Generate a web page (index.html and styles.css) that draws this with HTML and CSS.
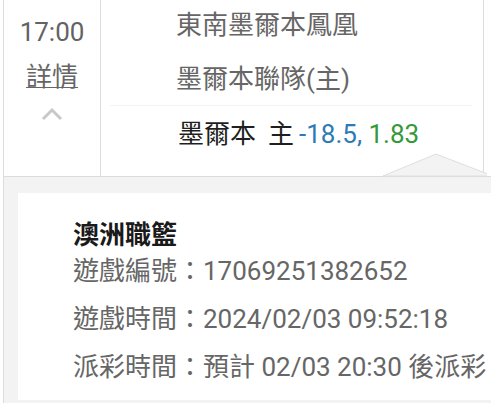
FILE: index.html
```html
<!DOCTYPE html>
<html lang="zh-Hant">
<head>
<meta charset="utf-8">
<link rel="stylesheet" href="styles.css">
</head>
<body>
<div class="frame">
  <div class="row">
    <div class="time-col">
      <div class="time">17:00</div>
      <a class="detail-link">詳情</a>
      <svg class="chev" width="22" height="14" viewBox="0 0 22 14"><path d="M2 12 L11 3 L20 12" fill="none" stroke="#c8c8c8" stroke-width="3"/></svg>
    </div>
    <div class="bet-col">
      <div class="team">東南墨爾本鳳凰</div>
      <div class="team">墨爾本聯隊(主)</div>
      <div class="divider"></div>
      <div class="pick"><span>墨爾本</span><span class="side">主</span><span class="hdp">-18.5,</span> <span class="odds">1.83</span></div>
    </div>
    <svg class="notch" width="104" height="24" viewBox="0 0 104 24"><polygon points="0,23 53,1 110,23" fill="#f3f3f3" stroke="#dedede" stroke-width="1"/></svg>
  </div>
  <div class="panel">
    <div class="card">
      <div class="league">澳洲職籃</div>
      <div class="info">遊戲編號：17069251382652</div>
      <div class="info">遊戲時間：2024/02/03 09:52:18</div>
      <div class="info">派彩時間：預計 02/03 20:30 後派彩</div>
    </div>
  </div>
</div>
</body>
</html>
```
FILE: styles.css
```css
html, body {
  margin: 0;
  padding: 0;
  background: #fff;
}
body {
  font-family: Roboto, "Noto Sans CJK TC", sans-serif;
  font-size: 26px;
  color: #666;
  width: 491px;
  height: 403px;
  overflow: hidden;
}
.frame {
  margin-left: 3px;
  border-left: 1px solid #dcdcdc;
  width: 487px;
  overflow: hidden;
}
.row {
  position: relative;
  display: flex;
  height: 176px;
  border-bottom: 1px solid #dcdcdc;
}
.time-col {
  width: 96px;
  border-right: 1px solid #dcdcdc;
  display: flex;
  flex-direction: column;
  align-items: center;
}
.time {
  padding-top: 10px;
  line-height: 45px;
  color: #636363;
}
.detail-link {
  line-height: 44px;
  color: #666;
  text-decoration: underline;
  text-underline-offset: 1px;
  text-decoration-thickness: 1px;
}
.chev {
  margin-top: 8px;
  display: block;
}
.bet-col {
  width: 382px;
  border-right: 1px solid #dcdcdc;
}
.team {
  padding-left: 75px;
  line-height: 50px;
  color: #666;
}
.team + .team {
  margin-top: 4px;
}
.divider {
  margin: 1px 11px 0 9px;
  height: 1px;
  background: #f3f3f3;
}
.pick {
  padding-left: 77px;
  line-height: 56px;
  color: #1f1f1f;
}
.side {
  margin-left: 12px;
}
.hdp {
  margin-left: 5px;
  color: #2c7ab6;
}
.odds {
  color: #34993a;
}
.notch {
  position: absolute;
  left: 379px;
  bottom: -1px;
  display: block;
}
.panel {
  background: #f3f3f3;
  padding: 16px 0 3px 14px;
}
.card {
  background: #fff;
  padding: 24px 0 15px 55px;
}
.league {
  line-height: 36px;
  font-weight: 700;
  color: #1a1a1a;
}
.info {
  line-height: 36px;
  color: #666;
}
.info + .info {
  margin-top: 12px;
}
```
